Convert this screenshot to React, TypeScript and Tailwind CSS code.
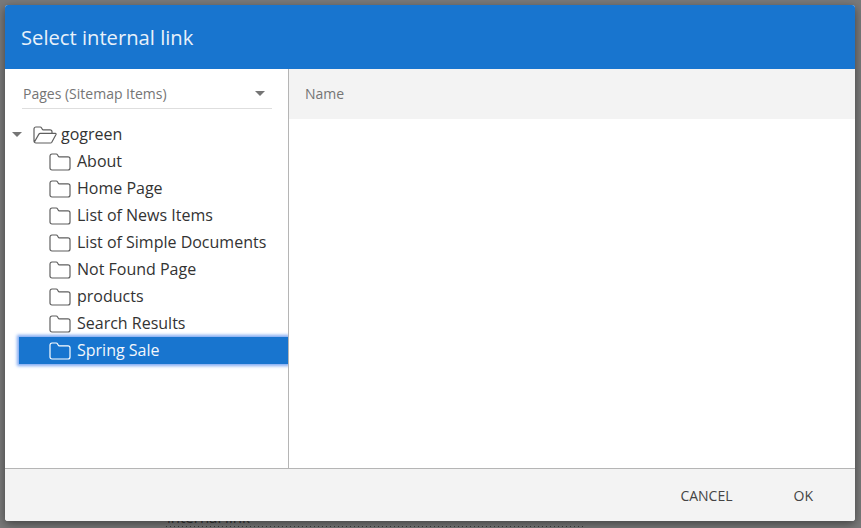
const PAGES = [
  'About',
  'Home Page',
  'List of News Items',
  'List of Simple Documents',
  'Not Found Page',
  'products',
  'Search Results',
  'Spring Sale',
]

function FolderIcon({ selected }: { readonly selected?: boolean }) {
  return (
    <svg width="22" height="18" viewBox="0 0 22 18" fill="none" className="shrink-0">
      <path
        d="M1 3.200C1 2 1.800 1 3 1h4.200c.7 0 1 .3 1.400 1l.7 1.200c.2.400.5.600 1 .600H19c1.200 0 2 .8 2 2V15c0 1.200-.8 2-2 2H3c-1.200 0-2-.8-2-2V3.200Z"
        stroke={selected ? '#ffffff' : '#5f5f5f'}
        strokeWidth="1.200"
      />
    </svg>
  )
}

function OpenFolderIcon() {
  return (
    <svg width="24" height="18" viewBox="0 0 24 18" fill="none" className="shrink-0">
      <path
        d="M3 17c-1.200 0-2-.8-2-2V3c0-1.200.8-2 2-2h4.200c.7 0 1 .3 1.400 1l.7 1.200c.2.400.5.600 1 .600H17c1.200 0 2 .8 2 2v1.400M3 17h14.500c.6 0 1-.3 1.300-.8L23 8.500c.3-.6 0-1.200-.7-1.200H7.200c-.6 0-1 .3-1.300.8L1.400 16"
        stroke="#5f5f5f"
        strokeWidth="1.200"
      />
    </svg>
  )
}

function Caret({ className }: { readonly className: string }) {
  return <span className={`h-0 w-0 border-x-[5px] border-t-[5px] border-x-transparent ${className}`} />
}

export default function App() {
  return (
    <div className="h-[528px] w-[861px] overflow-hidden bg-[#797979] px-[5px] pt-[5px] font-['Open_Sans','Noto_Sans',sans-serif]">
      <div className="relative z-10 flex h-[516px] w-[850px] flex-col overflow-hidden rounded-[3px] bg-white shadow-[0_3px_10px_rgba(0,0,0,0.45)]">
        <header className="flex h-[64px] shrink-0 items-center bg-[#1875cf] pl-4 text-[20.200px] text-[#e8f1fa]">
          Select internal link
        </header>

        <div className="flex min-h-0 flex-1">
          <aside className="w-[284px] shrink-0 overflow-hidden border-r border-[#b5b5b5] pt-[13px]">
            <div className="ml-[17px] mr-4 flex h-[27px] items-center justify-between border-b border-[#dedede] pb-1 pl-px pr-[7px] text-[14px] text-[#757575]">
              Pages (Sitemap Items)
              <Caret className="border-t-[#757575]" />
            </div>

            <div className="mt-[12px] text-[16px] leading-[27px] text-[#333333]">
              <div className="flex h-[27px] items-center pl-[7px]">
                <Caret className="mr-[11px] border-t-[#757575]" />
                <OpenFolderIcon />
                <span className="ml-[4px]">gogreen</span>
              </div>
              {PAGES.map((page) => {
                const selected = page === 'Spring Sale'
                return (
                  <div
                    key={page}
                    className={
                      selected
                        ? 'ml-[14px] flex h-[27px] items-center bg-[#1875cf] pl-[30px] text-[#f2f7fc] shadow-[0_0_3px_2px_#7fa9f2]'
                        : 'flex h-[27px] items-center pl-[44px]'
                    }
                  >
                    <FolderIcon selected={selected} />
                    <span className="ml-[6px] whitespace-nowrap">{page}</span>
                  </div>
                )
              })}
            </div>
          </aside>

          <main className="min-w-0 flex-1">
            <div className="flex h-[50px] items-center bg-[#f3f3f3] px-[16px] pb-[2px] text-[14px] text-[#757575]">Name</div>
          </main>
        </div>

        <footer className="flex h-[53px] shrink-0 items-center justify-end border-t border-[#b5b5b5] bg-[#f3f3f3] pr-[42px] text-[14px] text-[#444444]">
          <button type="button">CANCEL</button>
          <button type="button" className="ml-[61px]">
            OK
          </button>
        </footer>
      </div>

      <div className="-mt-[11px] ml-[162px] text-[15px] leading-[14px] text-[#333333]">internal link</div>
      <div className="ml-[161px] mt-[2px] h-px w-[420px] bg-[repeating-linear-gradient(90deg,#3a3a3a_0_1px,transparent_1px_4px)]" />
    </div>
  )
}
